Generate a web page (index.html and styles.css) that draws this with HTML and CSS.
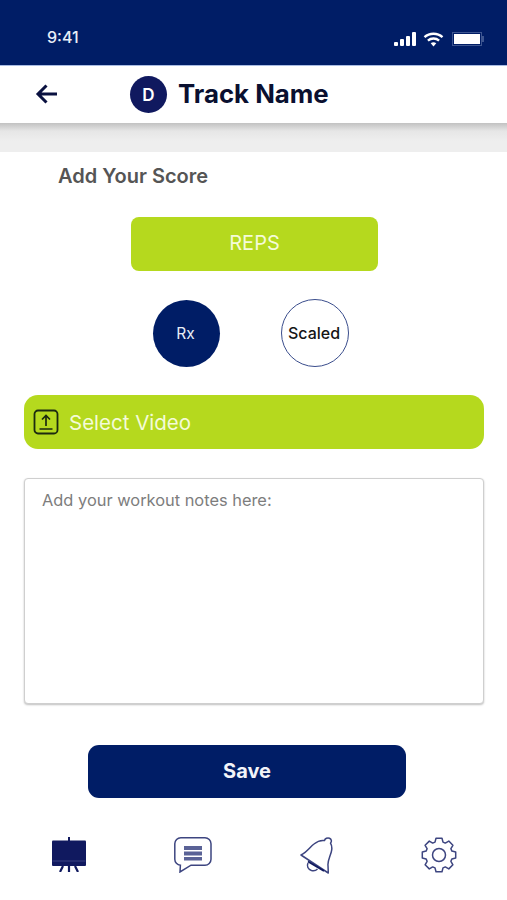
FILE: index.html
```html
<!DOCTYPE html>
<html lang="en">
<head>
<meta charset="utf-8">
<title>Add Your Score</title>
<link rel="stylesheet" href="styles.css">
</head>
<body>
<div class="screen">
  <div class="status">
    <span class="time">9:41</span>
    <div class="status-icons">
      <svg class="signal" width="23" height="14" viewBox="0 0 23 14"><rect x="0" y="10" width="4" height="4" rx="1"/><rect x="6" y="7" width="4" height="7" rx="1"/><rect x="12" y="4" width="4" height="10" rx="1"/><rect x="18" y="0" width="4" height="14" rx="1"/></svg>
      <svg class="wifi" width="21" height="15" viewBox="0 0 21 15"><path d="M1.5 5.2C6.6.6 14.4.6 19.5 5.2M4.9 8.6c3.2-2.8 8-2.8 11.2 0" fill="none" stroke="#fff" stroke-width="2.4"/><path d="M7.7 11.2c1.7-1.3 3.9-1.3 5.6 0L10.5 14.5z" fill="#fff"/></svg>
      <div class="battery"><div class="battery-fill"></div></div>
    </div>
  </div>
  <header class="header">
    <svg class="back" width="24" height="22" viewBox="0 0 24 22"><path d="M22 11H3M11.5 2.5L3 11l8.5 8.5" fill="none" stroke="#0a1140" stroke-width="3"/></svg>
    <div class="avatar">D</div>
    <h1 class="track">Track Name</h1>
  </header>
  <div class="band"></div>
  <main class="content">
    <h2 class="title">Add Your Score</h2>
    <div class="reps">REPS</div>
    <div class="choices">
      <div class="choice choice-on">Rx</div>
      <div class="choice choice-off">Scaled</div>
    </div>
    <div class="video">
      <svg width="26" height="26" viewBox="0 0 26 26"><rect x="1.5" y="1.5" width="23" height="23" rx="3.5" fill="none" stroke="#1c2a10" stroke-width="1.8"/><path d="M13 17V7M9 10.5L13 6.5l4 4M6.5 20h13" fill="none" stroke="#1c2a10" stroke-width="1.7"/></svg>
      <span>Select Video</span>
    </div>
    <div class="notes">Add your workout notes here:</div>
    <div class="save">Save</div>
  </main>
  <nav class="nav">
    <svg width="34" height="35" viewBox="0 0 34 35"><rect x="0" y="3.5" width="34" height="25.5" rx="1" fill="#10195f"/><path d="M17 0v4" stroke="#10195f" stroke-width="2"/><path d="M0.5 24h33" stroke="#3a4384" stroke-width="1"/><path d="M11 29l-3 6M17 29v6M23 29l3 6" stroke="#10195f" stroke-width="2.2"/></svg>
    <svg width="38" height="36" viewBox="0 0 38 36"><path d="M7 .8h24a6 6 0 0 1 6 6v15.4a6 6 0 0 1-6 6H17L6 35l.4-6.8A6 6 0 0 1 .8 22.2V6.800a6 6 0 0 1 6-6z" fill="none" stroke="#3d4580" stroke-width="1.5"/><path d="M10 9h18v4H10zM10 14.5h18v4H10zM10 20h18v3.5H10z" fill="#5a6296"/></svg>
    <svg width="33" height="37" viewBox="0 0 33 37"><path d="M1 18C7 15 10 10 14 7c3-2.5 7-4 10.5-3.500.5-2 3-3.2 5-2.3s2.500 3.300 1 5c1.500 2.500 1.600 6 .7 9-1.400 5-3.700 8.800-3.200 13.300l.3 7.500z" fill="none" stroke="#3d4580" stroke-width="1.5" stroke-linejoin="round"/><path d="M8 26c-1.500 3 0 6.500 3.500 7.500 2.500.6 4.500 0 6-1.500" fill="none" stroke="#3d4580" stroke-width="1.5"/><path d="M8 24.500L24 34" stroke="#10195f" stroke-width="2"/></svg>
    <svg width="36" height="36" viewBox="0 0 36 36"><path d="M21 1.300L22 5.100L24.300 6.100L27.800 4.100L31.900 8.300L29.900 11.700L30.900 14.100L34.700 15.100V20.900L30.900 21.900L29.900 24.300L31.900 27.800L27.800 31.900L24.300 29.900L22 30.900L21 34.700H15L14 30.900L11.700 29.900L8.300 31.900L4.100 27.800L6.100 24.300L5.100 21.900L1.300 20.900V15.100L5.100 14.100L6.100 11.700L4.100 8.300L8.300 4.100L11.700 6.100L14 5.100L15 1.300z" fill="none" stroke="#3d4580" stroke-width="1.5" stroke-linejoin="round"/><circle cx="18" cy="18" r="6.5" fill="none" stroke="#3d4580" stroke-width="1.5"/></svg>
  </nav>
</div>
</body>
</html>
```

FILE: styles.css
```css
* { box-sizing: border-box; }
html, body { margin: 0; padding: 0; background: #fff; }
body { font-family: Inter, "Liberation Sans", sans-serif; }
.screen { width: 507px; height: 900px; overflow: hidden; display: flex; flex-direction: column; background: #fff; }

.status { height: 65px; background: #001d66; color: #fff; display: flex; justify-content: space-between; padding: 28px 25px 0 47px; }
.time { font-size: 16px; font-weight: 500; line-height: 18px; color: #e8edf6; }
.status-icons { display: flex; align-items: flex-start; gap: 6px; padding-top: 4px; }
.signal { fill: #fff; }
.battery { position: relative; width: 30px; height: 14px; margin-left: 2px; border: 1px solid #3d5590; padding: 1px; }
.battery::after { content: ""; position: absolute; right: -3px; top: 3px; width: 2px; height: 6px; background: #3d5590; }
.battery-fill { width: 100%; height: 100%; background: #fff; }

.header { height: 58px; background: #fff; border-top: 1px solid #a9bce3; display: flex; align-items: center; padding-left: 35px; }
.back { margin: 0 71px 1px 0; flex: none; }
.avatar { width: 37px; height: 37px; border-radius: 50%; background: #10195f; color: #fff; font-size: 17px; font-weight: 600; display: flex; align-items: center; justify-content: center; flex: none; }
.track { margin: 0 0 2px 11px; font-size: 25.8px; font-weight: 700; line-height: 30px; color: #0a1030; }

.band { height: 29px; background: linear-gradient(#c2c2c2 0, #e6e6e6 8px, #eeeeee 18px); }

.content { display: flex; flex-direction: column; flex: 1; }
.title { margin: 12px 0 0 58px; font-size: 20px; font-weight: 600; line-height: 24px; color: #555; }
.reps { width: 247px; height: 54px; margin: 29px 0 0 131px; padding-bottom: 2px; border-radius: 8px; background: #b5d91e; color: #f4fbd8; font-size: 20px; font-weight: 400; display: flex; align-items: center; justify-content: center; }
.choices { display: flex; align-items: flex-start; gap: 61px; margin: 28px 0 0 153px; }
.choice { width: 67px; height: 67px; border-radius: 50%; display: flex; align-items: center; justify-content: center; font-size: 15.5px; }
.choice-on { background: #001d66; color: #e8edf6; margin-top: 1px; padding-right: 2px; }
.choice-off { width: 68px; height: 68px; padding-right: 2px; border: 1.5px solid #3a4d8c; color: #151515; font-size: 16px; font-weight: 500; background: #fff; }
.video { height: 54px; margin: 28px 23px 0 24px; border-radius: 14px; background: #b5d91e; color: #f4fbd8; display: flex; align-items: center; gap: 10px; padding-left: 9px; font-size: 20.5px; }
.notes { height: 226px; margin: 29px 23px 0 24px; border: 1px solid #cfcfcf; border-radius: 4px; box-shadow: 0 1px 2px rgba(0, 0, 0, .25); padding: 11px 17px; font-size: 16.4px; line-height: 20px; color: #7d7d7d; background: #fff; }
.save { width: 318px; height: 53px; margin: 41px 0 0 88px; padding-bottom: 2px; border-radius: 11px; background: #001d66; color: #f2f4f9; font-size: 20px; font-weight: 700; display: flex; align-items: center; justify-content: center; }

.nav { display: flex; justify-content: space-between; align-items: flex-start; padding: 0 50px 27px 52px; height: 63px; }
```
